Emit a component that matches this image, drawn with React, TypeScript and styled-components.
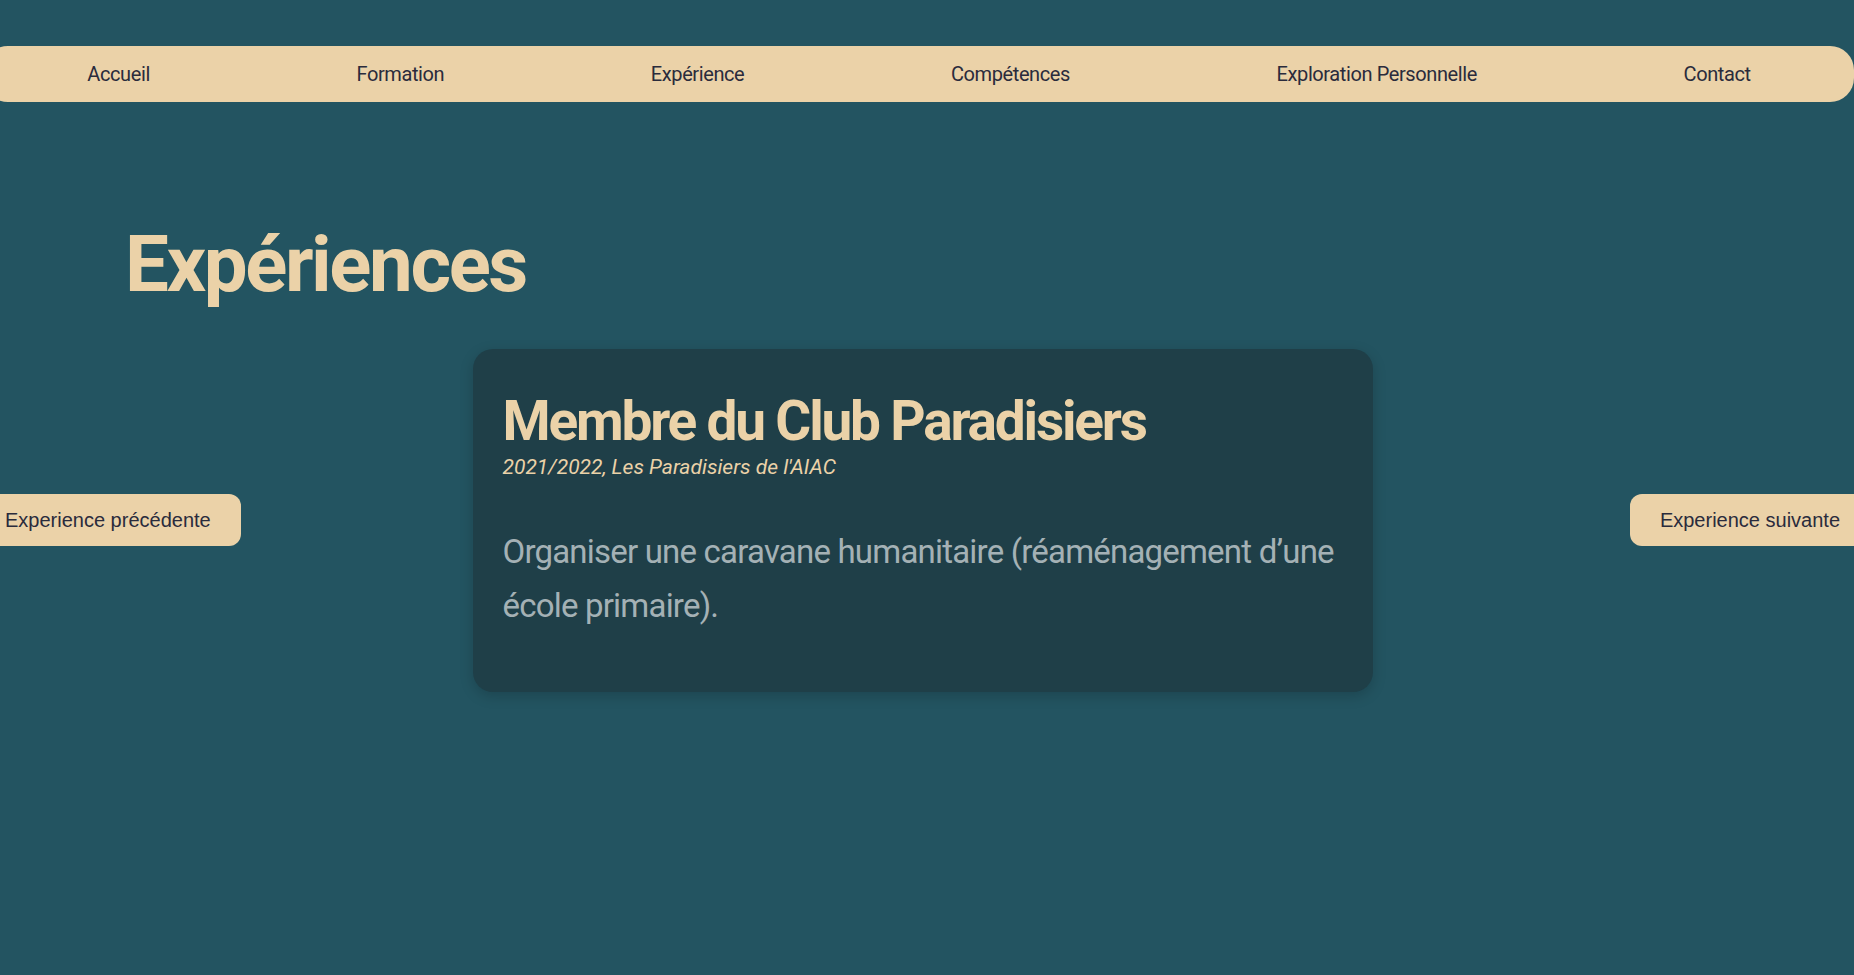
import styled, { createGlobalStyle } from "styled-components";

const cream = "#ebd2a8";
const ink = "#2a2b3c";
const display = `Roboto, "Liberation Sans", sans-serif`;

const GlobalStyle = createGlobalStyle`
  html, body {
    margin: 0;
    padding: 0;
    background-color: #235461;
    overflow-x: hidden;
  }
  body {
    min-height: 100vh;
    font-family: ${display};
  }
`;

const links = [
  "Accueil",
  "Formation",
  "Expérience",
  "Compétences",
  "Exploration Personnelle",
  "Contact",
];

export default function App() {
  return (
    <>
      <GlobalStyle />
      <Page>
        <NavBar>
          {links.map((l) => (
            <NavLink key={l}>{l}</NavLink>
          ))}
        </NavBar>
        <PageTitle>Expériences</PageTitle>
        <Slider>
          <SlideButton side="left">Experience précédente</SlideButton>
          <Card>
            <CardTitle>Membre du Club Paradisiers</CardTitle>
            <CardMeta>2021/2022, Les Paradisiers de l'AIAC</CardMeta>
            <CardText>
              Organiser une caravane humanitaire (réaménagement d’une école
              primaire).
            </CardText>
          </Card>
          <SlideButton side="right">Experience suivante</SlideButton>
        </Slider>
      </Page>
    </>
  );
}

const Page = styled.div`
  min-height: 100vh;
  padding-top: 46px;
  box-sizing: border-box;
`;

const NavBar = styled.nav`
  display: flex;
  justify-content: space-around;
  align-items: center;
  height: 56px;
  margin-left: -16px;
  width: calc(100% + 16px);
  background-color: ${cream};
  border-radius: 24px;
`;

const NavLink = styled.a`
  font-family: ${display};
  font-size: 20px;
  letter-spacing: -0.4px;
  color: ${ink};
  cursor: pointer;
`;

const PageTitle = styled.h1`
  margin: 116px 0 0;
  padding-left: 125px;
  font-family: ${display};
  font-size: 78px;
  font-weight: 700;
  letter-spacing: -2.4px;
  line-height: 1.2;
  color: ${cream};
`;

const Slider = styled.div`
  display: grid;
  grid-template-columns: 1fr auto 1fr;
  align-items: center;
  margin: 37px -16px 0 -25px;
`;

const SlideButton = styled.button<{ side: "left" | "right" }>`
  justify-self: ${(p) => (p.side === "left" ? "start" : "end")};
  height: 52px;
  padding: 0 30px;
  border: none;
  border-radius: 12px;
  background-color: ${cream};
  color: ${ink};
  font-family: "Liberation Sans", Arial, sans-serif;
  font-size: 20px;
  cursor: pointer;
`;

const Card = styled.article`
  width: 900px;
  box-sizing: border-box;
  padding: 39px 20px 59px 30px;
  background-color: #1f3f48;
  border-radius: 20px;
  box-shadow: 0 4px 14px rgba(0, 0, 0, 0.18);
`;

const CardTitle = styled.h2`
  margin: 0;
  font-family: ${display};
  font-size: 55px;
  font-weight: 700;
  letter-spacing: -2.2px;
  line-height: 66px;
  color: ${cream};
`;

const CardMeta = styled.p`
  margin: 0;
  font-family: ${display};
  font-size: 21px;
  font-style: italic;
  line-height: 27px;
  color: ${cream};
`;

const CardText = styled.p`
  margin: 44px 0 0;
  font-family: ${display};
  font-size: 33px;
  letter-spacing: -0.8px;
  line-height: 54px;
  color: #a4b1b5;
`;
